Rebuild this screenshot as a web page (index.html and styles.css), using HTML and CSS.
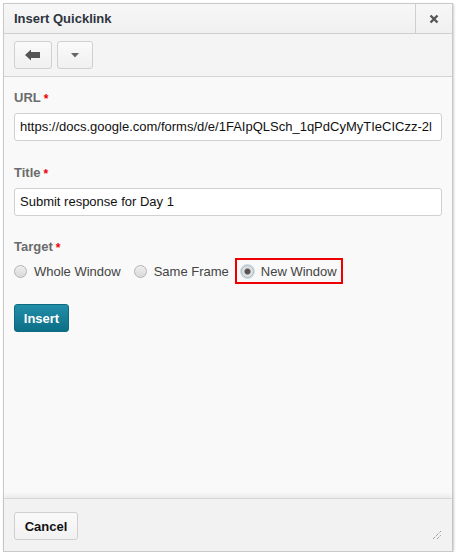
FILE: index.html
```html
<!DOCTYPE html>
<html>
<head>
<meta charset="utf-8">
<link rel="stylesheet" href="styles.css">
</head>
<body>
<div class="dialog">
  <div class="header">
    <div class="title">Insert Quicklink</div>
    <div class="close">
      <svg width="10" height="10" viewBox="0 0 10 10"><path d="M1.5 1.5 L8.5 8.5 M8.5 1.5 L1.5 8.5" stroke="#555" stroke-width="2.4" stroke-linecap="butt"/></svg>
    </div>
  </div>
  <div class="toolbar">
    <button class="tbtn back">
      <svg width="16" height="12" viewBox="0 0 16 12"><path d="M0 6 L6 0.5 L6 3 L15 3 L15 9 L6 9 L6 11.5 Z" fill="#555"/></svg>
    </button>
    <button class="tbtn menu">
      <svg width="8" height="5" viewBox="0 0 8 5"><path d="M0 0 L8 0 L4 4.5 Z" fill="#666"/></svg>
    </button>
  </div>
  <div class="body">
    <div class="field">
      <div class="label">URL<span class="req">*</span></div>
      <div class="input">https://docs.google.com/forms/d/e/1FAIpQLSch_1qPdCyMyTIeCICzz-2l</div>
    </div>
    <div class="field">
      <div class="label">Title<span class="req">*</span></div>
      <div class="input">Submit response for Day 1</div>
    </div>
    <div class="field target">
      <div class="label">Target<span class="req">*</span></div>
      <div class="radios">
        <div class="radio"><span class="dot"></span>Whole Window</div>
        <div class="radio"><span class="dot"></span>Same Frame</div>
        <div class="radio selected"><span class="dot on"></span>New Window</div>
      </div>
    </div>
    <button class="primary">Insert</button>
  </div>
  <div class="footer">
    <button class="cancel">Cancel</button>
    <svg class="grip" width="10" height="10" viewBox="0 0 10 10"><path d="M1 9 L9 1 M5 9 L9 5" stroke="#777" stroke-width="1" stroke-dasharray="1 1"/></svg>
  </div>
</div>
</body>
</html>
```

FILE: styles.css
```css
html, body { margin: 0; padding: 0; background: #fff; }
body { font-family: "Liberation Sans", Arial, sans-serif; font-size: 13px; color: #333; }
.dialog {
  margin: 3px 0 0 3px;
  width: 448px;
  height: 547px;
  border: 1px solid #c9c9c9;
  background: #f9f9f9;
  display: flex;
  flex-direction: column;
  box-shadow: 1px 1px 2px rgba(0,0,0,0.2);
}
.header {
  height: 29px;
  border-bottom: 1px solid #cfcfcf;
  display: flex;
  background: linear-gradient(#f7f7f7, #f0f0f0);
}
.title {
  flex: 1;
  padding-left: 10px;
  line-height: 29px;
  font-weight: bold;
  font-size: 13px;
  color: #2e3440;
}
.close {
  width: 36px;
  border-left: 1px solid #cfcfcf;
  display: flex;
  align-items: center;
  justify-content: center;
  padding-top: 1px;
}
.toolbar {
  display: flex;
  align-items: flex-start;
  gap: 5px;
  padding: 7px 0 0 10px;
  box-sizing: border-box;
  height: 43px;
  border-bottom: 1px solid #d3d3d3;
  background: #f4f4f4;
}
.tbtn {
  height: 28px;
  border: 1px solid #d0d0d0;
  border-radius: 3px;
  background: linear-gradient(#fafafa, #f0f0f0);
  display: flex;
  align-items: center;
  justify-content: center;
  padding: 0;
}
.back { width: 38px; }
.menu { width: 36px; }
.body {
  flex: 1;
  padding: 13px 10px 0 10px;
}
.field { margin-bottom: 24px; }
.target { margin-top: -1px; margin-bottom: 20px; }
.label {
  font-weight: bold;
  font-size: 13px;
  color: #6b6b6b;
  height: 16px;
  line-height: 16px;
  margin-bottom: 7px;
}
.req { color: #e00; font-size: 12px; margin-left: 3px; position: relative; top: 1px; }
.input {
  height: 26px;
  border: 1px solid #d0d0d0;
  border-radius: 3px;
  background: #fff;
  padding: 0 5px;
  line-height: 26px;
  font-size: 13px;
  color: #111;
  white-space: nowrap;
  overflow: hidden;
}
.radios { display: flex; align-items: center; margin-top: -4px; }
.radio {
  display: flex;
  align-items: center;
  font-size: 13px;
  color: #444;
  margin-right: 13px;
  height: 26px;
}
.dot {
  width: 11px;
  height: 11px;
  border: 1px solid #b5b5b5;
  border-radius: 50%;
  background: linear-gradient(#eee, #d9d9d9);
  margin-right: 7px;
  box-sizing: content-box;
}
.dot.on {
  background: radial-gradient(circle, #555 0, #555 2.5px, #dcdcdc 3.5px, #e9e9e9 100%);
  box-shadow: 0 0 0 1px #bfe0ee;
}
.radio.selected {
  border: 2px solid #e00;
  padding: 0 4px 0 4px;
  height: 22px;
  margin-left: -7px;
}
.primary {
  width: 55px;
  height: 28px;
  border: 1px solid #0e6b80;
  border-radius: 3px;
  background: linear-gradient(#238ea8, #0c6f86);
  color: #fff;
  font-family: "Liberation Sans", Arial, sans-serif;
  font-weight: bold;
  font-size: 13px;
  padding: 0;
}
.footer {
  border-top: 1px solid #d6d6d6;
  box-shadow: 0 -3px 4px rgba(0,0,0,0.06);
  background: #f2f2f2;
  display: flex;
  align-items: flex-start;
  justify-content: space-between;
  padding: 13px 10px 0 10px;
  box-sizing: border-box;
  height: 53px;
}
.cancel {
  width: 64px;
  height: 28px;
  border: 1px solid #cfcfcf;
  border-radius: 3px;
  background: linear-gradient(#fafafa, #f1f1f1);
  font-family: "Liberation Sans", Arial, sans-serif;
  font-weight: bold;
  font-size: 13px;
  color: #111;
  padding: 0;
}
.grip { margin-top: 18px; }
```
